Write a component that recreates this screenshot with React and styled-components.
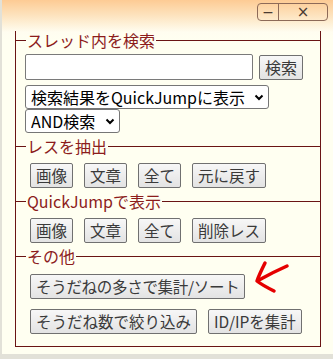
import styled, { createGlobalStyle } from 'styled-components'

const GlobalStyle = createGlobalStyle`
html, body {
    margin: 0;
    padding: 0;
    background: #e2e1d8;
}
body {
    font-family: "Noto Sans CJK JP", "Noto Sans", sans-serif;
}
`

const Window = styled.div`
margin-left: 2px;
width: 331px;
height: 354px;
background: linear-gradient(#fdcb94 0px, #fde4c0 16px, #fffdf0 32px, #fffff1 40px);
box-sizing: border-box;
overflow: hidden;
`

const TitleBar = styled.div`
display: flex;
justify-content: flex-end;
padding: 3px 5px 0 0;
height: 37px;
box-sizing: border-box;
`

const TitleButtons = styled.div`
display: flex;
border: 1px solid #8d6a58;
border-radius: 4px;
height: 18px;
box-sizing: border-box;
overflow: hidden;
`

const TitleButton = styled.span`
width: ${p => p.$w}px;
display: flex;
align-items: center;
justify-content: center;
border-left: ${p => p.$first ? 'none' : '1px solid #8d6a58'};
color: #4a3a32;
font-family: "DejaVu Sans", sans-serif;
font-size: ${p => p.$size}px;
line-height: 1;
`

const Panel = styled.div`
margin: 3px 0 0 13px;
width: 306px;
border: 1px solid #6a1414;
border-top: none;
padding-bottom: 12px;
box-sizing: border-box;
`

const Header = styled.div`
display: flex;
align-items: center;
height: 18px;
margin-top: ${p => p.$first ? '-9px' : '4px'};
color: #8c1c1c;
font-size: 16px;
line-height: 18px;
&::before {
    content: '';
    width: 10px;
    height: 1px;
    background: #6a1414;
}
&::after {
    content: '';
    flex: 1;
    height: 1px;
    background: #6a1414;
}
span {
    padding: 0 1px;
}
`

const Body = styled.div`
display: flex;
flex-direction: column;
align-items: flex-start;
padding: ${p => p.$pad};
gap: ${p => p.$gap || 0}px;
`

const Row = styled.div`
display: flex;
align-items: flex-start;
gap: ${p => p.$gap}px;
`

const TextInput = styled.input`
width: 228px;
height: 26px;
box-sizing: border-box;
border: 1px solid #7a7a7a;
border-radius: 2px;
background: #fff;
margin: 0;
`

const Button = styled.button`
height: 25px;
box-sizing: border-box;
padding: 0 5px;
margin: ${p => p.$top || 0}px 0 0;
border: 1px solid #707070;
border-radius: 2px;
background: linear-gradient(#f7f7f7, #e3e3e3);
color: #3a3a3a;
font-family: "Noto Sans CJK JP", sans-serif;
font-size: ${p => p.$size || 15.5}px;
line-height: 23px;
white-space: nowrap;
`

const SelectWrap = styled.div`
position: relative;
display: inline-flex;
`

const Select = styled.select`
appearance: none;
height: 24px;
box-sizing: border-box;
border: 1px solid #767676;
border-radius: 3px;
background: #fff;
color: #000;
margin: 0;
padding: 0 23px 0 5px;
font-family: "Noto Sans CJK JP", sans-serif;
font-size: 16px;
line-height: 22px;
`

const Chevron = styled.svg`
position: absolute;
right: 5px;
top: 9px;
pointer-events: none;
`

function Dropdown({ label }) {
    return (
        <SelectWrap>
            <Select defaultValue={label}>
                <option>{label}</option>
            </Select>
            <Chevron width='10' height='7' viewBox='0 0 10 7'>
                <path d='M1.5 1.5 L5 5 L8.5 1.5' fill='none' stroke='#000' strokeWidth='2' />
            </Chevron>
        </SelectWrap>
    )
}

const Arrow = styled.svg`
margin: -15px 0 0 6px;
flex: none;
`

export default function App() {
    return (
        <>
            <GlobalStyle />
            <Window>
                <TitleBar>
                    <TitleButtons>
                        <TitleButton $first $w={20} $size={14}>−</TitleButton>
                        <TitleButton $w={48} $size={15}>×</TitleButton>
                    </TitleButtons>
                </TitleBar>
                <Panel>
                    <Header $first><span>スレッド内を検索</span></Header>
                    <Body $pad='5px 0 0 9px'>
                        <Row $gap={6}>
                            <TextInput type='text' />
                            <Button $size={16} $top={1}>検索</Button>
                        </Row>
                        <div style={{ height: 5 }} />
                        <Dropdown label='検索結果をQuickJumpに表示' />
                        <Dropdown label='AND検索' />
                    </Body>
                    <Header><span>レスを抽出</span></Header>
                    <Body $pad='8px 0 0 14px'>
                        <Row $gap={11}>
                            <Button>画像</Button>
                            <Button>文章</Button>
                            <Button>全て</Button>
                            <Button>元に戻す</Button>
                        </Row>
                    </Body>
                    <Header><span>QuickJumpで表示</span></Header>
                    <Body $pad='8px 0 0 14px'>
                        <Row $gap={11}>
                            <Button>画像</Button>
                            <Button>文章</Button>
                            <Button>全て</Button>
                            <Button>削除レス</Button>
                        </Row>
                    </Body>
                    <Header><span>その他</span></Header>
                    <Body $pad='9px 0 0 14px' $gap={10}>
                        <Row $gap={0}>
                            <Button style={{ letterSpacing: '-0.3px' }}>そうだねの多さで集計/ソート</Button>
                            <Arrow width='42' height='36' viewBox='0 0 42 36'>
                                <path d='M36 7 C 27 11, 17 16, 8 21' fill='none' stroke='#e50000' strokeWidth='3.5' strokeLinecap='round' />
                                <path d='M14 4 C 11 10, 8 16, 6 22 C 11 26, 17 29, 23 32' fill='none' stroke='#e50000' strokeWidth='3.5' strokeLinecap='round' strokeLinejoin='round' />
                            </Arrow>
                        </Row>
                        <Row $gap={11}>
                            <Button>そうだね数で絞り込み</Button>
                            <Button>ID/IPを集計</Button>
                        </Row>
                    </Body>
                </Panel>
            </Window>
        </>
    )
}
